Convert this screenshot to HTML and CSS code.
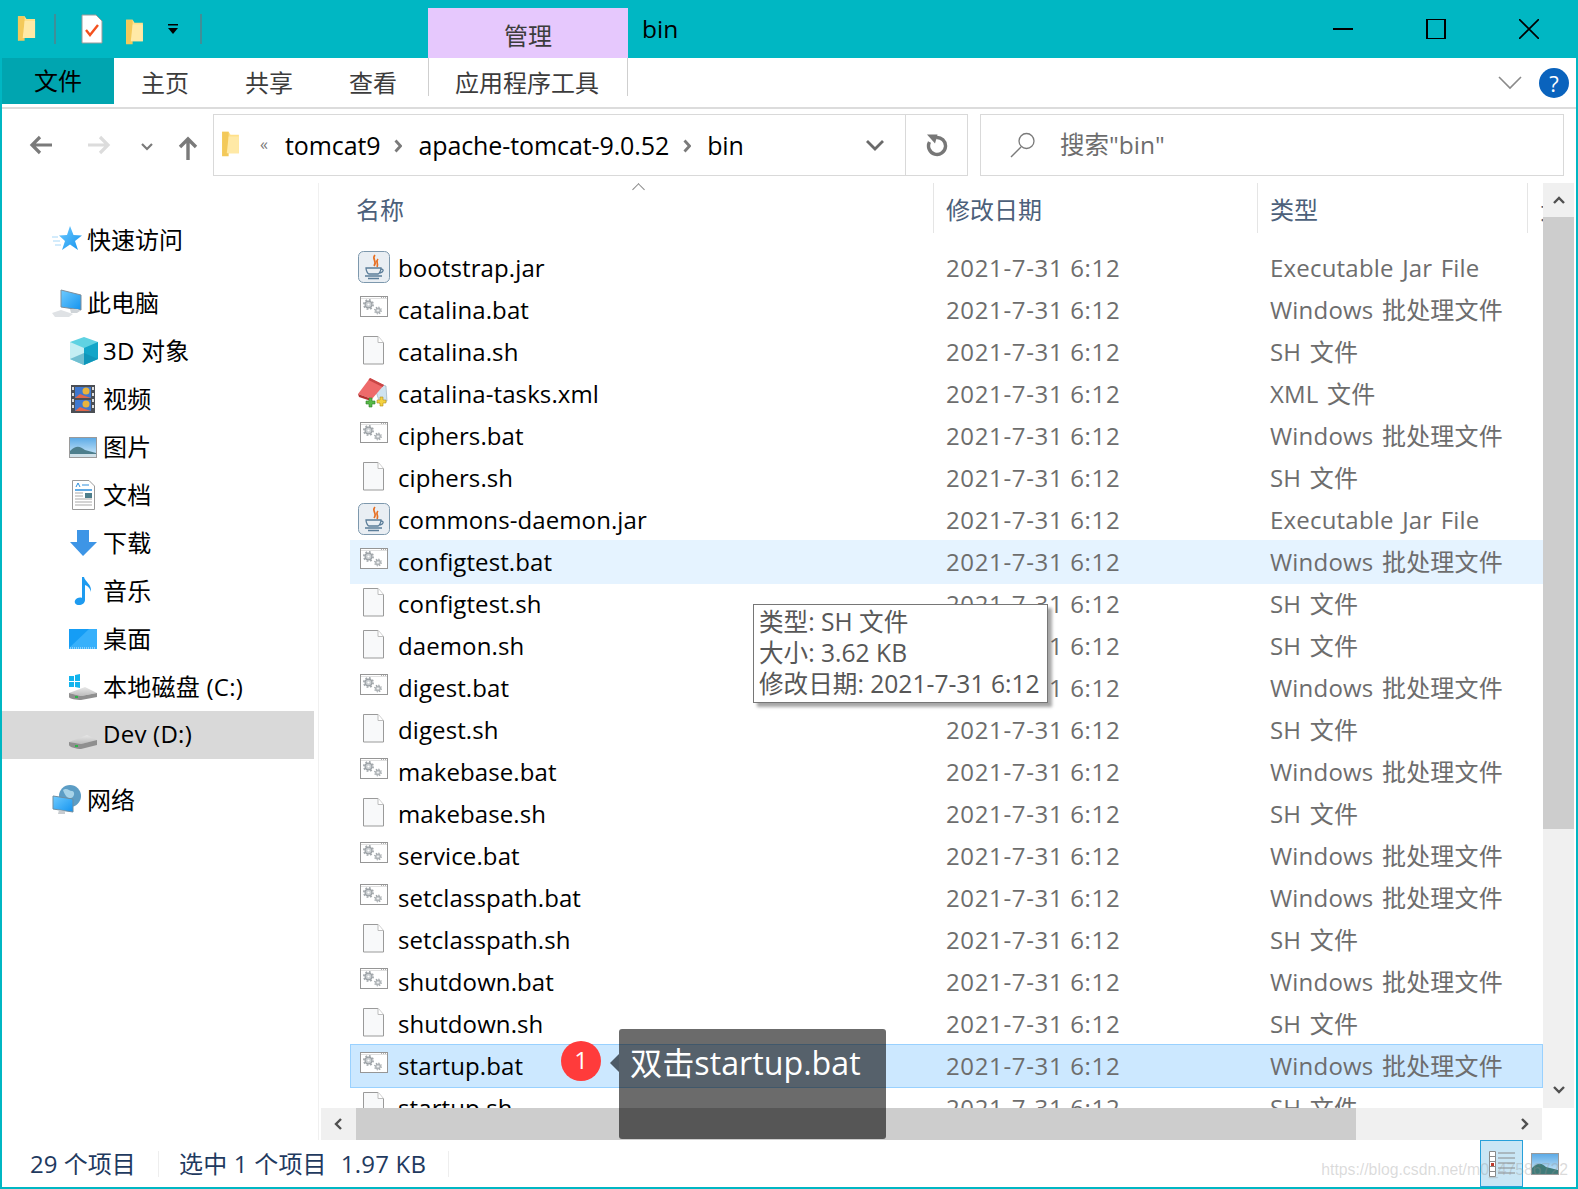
FILE: index.html
```html
<!DOCTYPE html>
<html lang="zh-CN">
<head>
<meta charset="utf-8">
<title>bin</title>
<link rel="stylesheet" href="styles.css">
</head>
<body>
<svg class="defs" width="0" height="0" aria-hidden="true">
  <defs>
    <linearGradient id="blue" x1="0" y1="0" x2="1" y2="1"><stop offset="0" stop-color="#6fcbff"/><stop offset="1" stop-color="#1493ee"/></linearGradient>
    <linearGradient id="disk" x1="0" y1="0" x2="0" y2="1"><stop offset="0" stop-color="#e8e8e8"/><stop offset="1" stop-color="#bcbcbc"/></linearGradient>
    <linearGradient id="sky" x1="0" y1="0" x2="0" y2="1"><stop offset="0" stop-color="#5aa9e6"/><stop offset="1" stop-color="#d8eefa"/></linearGradient>
    <symbol id="folder" viewBox="0 0 20 30">
      <path d="M1 2h7l2 3h9v20H4l-3 3z" fill="#ffe08a"/>
      <path d="M1 2h7v26H5l-4 0z" fill="#f3c95a"/>
      <path d="M6 25h13V7H8z" fill="#ffe9a6"/>
    </symbol>
    <g id="gear"><circle r="3.400" fill="#c9cdd0" stroke="#9aa0a4" stroke-width="1.200"/><circle r="4.600" fill="none" stroke="#a4a9ad" stroke-width="1.800" stroke-dasharray="1.800 1.800"/><circle r="1.100" fill="#fff"/></g>
    <symbol id="bat" viewBox="0 0 32 32">
      <rect x="2.500" y="3.500" width="27" height="20" fill="#fff" stroke="#969696"/>
      <path d="M3 5.500h26" stroke="#e0e0e0"/>
      <path d="M23 4.500h1M25 4.500h1M27 4.500h1" stroke="#b0b0b0"/>
      <use href="#gear" transform="translate(10.500 11.500)"/>
      <use href="#gear" transform="translate(20 17.500) scale(.72)"/>
    </symbol>
    <symbol id="sh" viewBox="0 0 32 32">
      <path d="M5.500 1.500H20l5.500 6v21.500H5.500z" fill="#f8f9fa" stroke="#9a9a9a"/>
      <path d="M20 1.500v6h5.500" fill="#fff" stroke="#bdbdbd"/>
    </symbol>
    <symbol id="jar" viewBox="0 0 32 32">
      <rect x="0.500" y="0.500" width="31" height="31" rx="5" fill="#e9eef3" stroke="#7d98ad"/>
      <path d="M17 4c-4 4 3 6-1 11M20 8c-3 3 1 4-1 8" fill="none" stroke="#e76f22" stroke-width="1.700"/>
      <path d="M8 17h15c0 3-2 6-3 6h-9c-1 0-3-3-3-6z" fill="none" stroke="#5b7d99" stroke-width="1.300"/>
      <path d="M23 18c3 0 3 3-1 4M7 25h17M10 27.500h11" fill="none" stroke="#5b7d99" stroke-width="1.300"/>
    </symbol>
    <symbol id="xml" viewBox="0 0 32 32" overflow="visible">
      <path d="M15 5l13 4 1 15-7 3z" fill="#cfe3ef" stroke="#8fa5b3" stroke-width=".6"/>
      <path d="M12 1l14 7-12 14L0 17z" fill="#ee6a6a"/>
      <path d="M12 1l14 7-1.500 2L10.500 3z" fill="#c94646"/>
      <path d="M0 17l14 5-1 2L1 20z" fill="#b52f2f"/>
      <path d="M11 21h3v3h3v3h-3v3h-3v-3H8v-3h3z" fill="#57b947" stroke="#2e7d2a" stroke-width=".6"/>
      <path d="M22 20h3v3h3v3h-3v3h-3v-3h-3v-3h3z" fill="#f4d240" stroke="#b28f1d" stroke-width=".6"/>
    </symbol>
  </defs>
</svg>

<div class="window">
  <header class="titlebar">
    <div class="qat">
      <svg class="qat-folder" viewBox="0 0 20 30"><use href="#folder"/></svg>
      <span class="qat-sep"></span>
      <svg class="qat-doc" viewBox="0 0 22 30"><path d="M1 1h14l6 6v22H1z" fill="#fff" stroke="#9a9a9a"/><path d="M5 16l4 5 8-10" fill="none" stroke="#f4511e" stroke-width="2.400"/></svg>
      <svg class="qat-folder2" viewBox="0 0 20 30"><use href="#folder"/></svg>
      <svg class="qat-drop" viewBox="0 0 12 11"><path d="M1 0h10v1.500H1z" fill="#000"/><path d="M1 4h10l-5 6z" fill="#000"/></svg>
      <span class="qat-sep"></span>
    </div>
    <div class="manage-tab">管理</div>
    <div class="wintitle">bin</div>
    <div class="wincontrols">
      <svg class="wc" viewBox="0 0 20 20"><path d="M0 10h20" stroke="#000" stroke-width="2"/></svg>
      <svg class="wc" viewBox="0 0 20 20"><rect x="1" y="0" width="18" height="20" fill="none" stroke="#000" stroke-width="2"/></svg>
      <svg class="wc" viewBox="0 0 20 20"><path d="M0 0l20 20M20 0L0 20" stroke="#000" stroke-width="1.600"/></svg>
    </div>
  </header>

  <nav class="ribbon">
    <div class="tab tab-file">文件</div>
    <div class="tab tab-home">主页</div>
    <div class="tab tab-share">共享</div>
    <div class="tab tab-view">查看</div>
    <div class="tab tab-tools">应用程序工具</div>
    <div class="ribbon-right">
      <svg class="ribbon-chev" viewBox="0 0 24 14"><path d="M1 1l11 11L23 1" fill="none" stroke="#8a8a8a" stroke-width="1.600"/></svg>
      <div class="help">?</div>
    </div>
  </nav>

  <div class="addressrow">
    <div class="navbtns">
      <svg class="nav-icon nav-back" viewBox="0 0 24 20"><path d="M23 10H3M11 2l-8 8 8 8" fill="none" stroke="#7a7a7a" stroke-width="3.200"/></svg>
      <svg class="nav-icon nav-fwd" viewBox="0 0 24 20"><path d="M1 10h20M13 2l8 8-8 8" fill="none" stroke="#dcdcdc" stroke-width="3.200"/></svg>
      <svg class="nav-icon nav-down" viewBox="0 0 12 8"><path d="M1 1l5 5 5-5" fill="none" stroke="#7a7a7a" stroke-width="2.200"/></svg>
      <svg class="nav-icon nav-up" viewBox="0 0 20 24"><path d="M10 24V3M2 11l8-8 8 8" fill="none" stroke="#7a7a7a" stroke-width="3.400"/></svg>
    </div>
    <div class="addressbox">
      <svg class="addr-folder" viewBox="0 0 20 30"><use href="#folder"/></svg>
      <span class="addr-more">«</span>
      <span class="crumb">tomcat9</span>
      <svg class="crumb-sep" viewBox="0 0 8 14"><path d="M1.500 1.500L6.500 7l-5 5.500" fill="none" stroke="#7a7a7a" stroke-width="2.800"/></svg>
      <span class="crumb">apache-tomcat-9.0.52</span>
      <svg class="crumb-sep" viewBox="0 0 8 14"><path d="M1.500 1.500L6.500 7l-5 5.500" fill="none" stroke="#7a7a7a" stroke-width="2.800"/></svg>
      <span class="crumb">bin</span>
      <svg class="addr-drop" viewBox="0 0 18 11"><path d="M1 1l8 8 8-8" fill="none" stroke="#6a6a6a" stroke-width="2.800"/></svg>
      <div class="addr-refresh">
        <svg class="refresh" viewBox="0 0 24 24"><path d="M11 4.500A8.500 8.500 0 1 1 4.500 9" fill="none" stroke="#777" stroke-width="3.400"/><path d="M2 1.500h10.500L10 10.500z" fill="#777"/></svg>
      </div>
    </div>
    <div class="searchbox">
      <svg class="search-icon" viewBox="0 0 26 26"><circle cx="16.500" cy="9" r="7.500" fill="none" stroke="#7a7a7a" stroke-width="1.300"/><path d="M11 15L1 25" stroke="#7a7a7a" stroke-width="1.500"/></svg>
      <span>搜索"bin"</span>
    </div>
  </div>

  <main class="main">
    <aside class="sidebar">
      <div class="navitem lv1 sp-top"><svg class="nav-ico" viewBox="0 0 32 32"><path d="M18 2l3.500 9 8.500.5-7 5.500 3 9-8-5.500-8 5.500 3-9-6-5.500 8-.5z" fill="url(#blue)"/><path d="M0 13h6M1 17h7M3 21h6" stroke="#a7d8f8" stroke-width="1"/></svg><span>快速访问</span></div>
      <div class="navitem lv1 sp-sec"><svg class="nav-ico" viewBox="0 0 32 32"><path d="M9 3l20 5v15L9 20z" fill="url(#blue)" stroke="#7f8d99"/><path d="M18 22l1 4h6l3-2-2-2z" fill="#cfd4d8"/><path d="M0 26l9-3 12 4-4 3H3z" fill="#dfe2e5"/></svg><span>此电脑</span></div>
      <div class="navitem lv2"><svg class="nav-ico" viewBox="0 0 32 32"><path d="M16 2l14 5v17l-14 6-14-6V7z" fill="#5fd2e2"/><path d="M2 7l14 6v17L2 24z" fill="#c4eef3"/><path d="M16 13l14-6v17l-14 6z" fill="#12a5c8"/><path d="M2 24l14-6 14 6-14 6z" fill="#0d86a8" opacity=".45"/></svg><span>3D 对象</span></div>
      <div class="navitem lv2"><svg class="nav-ico" viewBox="0 0 32 32"><rect x="3" y="2" width="24" height="28" fill="#4b4f55"/><rect x="7" y="4" width="16" height="11" fill="#3f78d0"/><rect x="7" y="17" width="16" height="11" fill="#3f78d0"/><path d="M7 15l5-4 5 2 6 2zM7 28l5-4 5 2 6 2z" fill="#e0674a"/><circle cx="18" cy="8" r="3.500" fill="#e9b33c"/><circle cx="18" cy="21" r="3.500" fill="#e9b33c"/><path d="M4 4h2v3H4zM4 10h2v3H4zM4 16h2v3H4zM4 22h2v3H4zM24 4h2v3h-2zM24 10h2v3h-2zM24 16h2v3h-2zM24 22h2v3h-2z" fill="#ddd"/></svg><span>视频</span></div>
      <div class="navitem lv2"><svg class="nav-ico" viewBox="0 0 32 32"><rect x="1.500" y="6.500" width="27" height="20" fill="url(#sky)" stroke="#9a9a9a"/><path d="M2 20c6-6 10-5 15-1l11 3v4H2z" fill="#4d7e8c"/><path d="M2 23h26v3H2z" fill="#cfe0e8"/></svg><span>图片</span></div>
      <div class="navitem lv2"><svg class="nav-ico" viewBox="0 0 32 32"><path d="M4.500 1.500H21l5.500 5.500v23.500h-22z" fill="#fff" stroke="#9a9a9a"/><path d="M7 11h17" stroke="#2e8fdc" stroke-width="1.500"/><path d="M8 8l2-4 2 4M14 6h7" stroke="#2e8fdc" fill="none"/><path d="M7 14h8M7 17h8M7 20h17M7 23h17M7 26h17" stroke="#a9a9a9"/><rect x="17" y="14" width="7" height="5" fill="#4d7e8c"/></svg><span>文档</span></div>
      <div class="navitem lv2"><svg class="nav-ico" viewBox="0 0 32 32"><path d="M9 3h12v12h8L15 29 2 15h7z" fill="#3d95e6"/></svg><span>下载</span></div>
      <div class="navitem lv2"><svg class="nav-ico" viewBox="0 0 32 32"><path d="M14 2h2c1 5 8 7 7 15-.5-3-3-6-6-7v15c0 3-3 5-6 5s-5-2-4-4.500 5-3.500 7-2.500z" fill="#1e9bf0"/></svg><span>音乐</span></div>
      <div class="navitem lv2"><svg class="nav-ico" viewBox="0 0 32 32"><rect x="1" y="6" width="28" height="20" fill="#159df5"/><path d="M1 25l20-19h8v20H1z" fill="#37b0fb"/><path d="M2 25h26" stroke="#dff3ff" stroke-dasharray="1 1"/></svg><span>桌面</span></div>
      <div class="navitem lv2"><svg class="nav-ico" viewBox="0 0 32 32"><path d="M1 5h5v5H1zM7 4l5-1v7H7zM1 11h5v5H1zM7 11h5v6l-5-1z" fill="#12b4ee"/><path d="M1 22l16-6 12 6-16 3z" fill="url(#disk)"/><path d="M1 22v4c0 2 8 3 12 3l16-3v-4l-16 3z" fill="#8f8f8f"/><path d="M7 25h3v2H7z" fill="#2fb24a"/></svg><span>本地磁盘 (C:)</span></div>
      <div class="navitem lv2 selected"><svg class="nav-ico" viewBox="0 0 32 32"><path d="M1 23l18-7 10 5-16 4z" fill="url(#disk)"/><path d="M1 23v3c0 2 8 4 12 4l16-4v-5l-16 4z" fill="#8f8f8f"/><path d="M7 26h3v2H7z" fill="#2fb24a"/></svg><span>Dev (D:)</span></div>
      <div class="navitem lv1 sp-net"><svg class="nav-ico" viewBox="0 0 32 32"><circle cx="18" cy="12" r="11" fill="#5c9dc5"/><path d="M11 6c4-3 6 1 9 1s3 6-1 7-6-3-8-8z" fill="#a7d3e8"/><path d="M1 12l20 3v13L1 25z" fill="url(#blue)" stroke="#6f8d9f"/><path d="M7 26l6 1v3H6z" fill="#c8ccd0"/></svg><span>网络</span></div>
    </aside>

    <section class="content">
      <div class="listarea">
        <div class="filelist">
          <div class="sort-caret"></div>
          <div class="listhead">
            <div class="hcell hname">名称</div>
            <div class="hcell hcol">修改日期</div>
            <div class="hcell hcol htype">类型</div>
            <div class="hcell hcol hsize">大小</div>
          </div>
          <div class="rows">
            <div class="row"><div class="name"><svg class="ficon"><use href="#jar"/></svg>bootstrap.jar</div><div class="cell date">2021-7-31 6:12</div><div class="cell kind">Executable Jar File</div></div>
            <div class="row"><div class="name"><svg class="ficon"><use href="#bat"/></svg>catalina.bat</div><div class="cell date">2021-7-31 6:12</div><div class="cell kind">Windows 批处理文件</div></div>
            <div class="row"><div class="name"><svg class="ficon"><use href="#sh"/></svg>catalina.sh</div><div class="cell date">2021-7-31 6:12</div><div class="cell kind">SH 文件</div></div>
            <div class="row"><div class="name"><svg class="ficon"><use href="#xml"/></svg>catalina-tasks.xml</div><div class="cell date">2021-7-31 6:12</div><div class="cell kind">XML 文件</div></div>
            <div class="row"><div class="name"><svg class="ficon"><use href="#bat"/></svg>ciphers.bat</div><div class="cell date">2021-7-31 6:12</div><div class="cell kind">Windows 批处理文件</div></div>
            <div class="row"><div class="name"><svg class="ficon"><use href="#sh"/></svg>ciphers.sh</div><div class="cell date">2021-7-31 6:12</div><div class="cell kind">SH 文件</div></div>
            <div class="row"><div class="name"><svg class="ficon"><use href="#jar"/></svg>commons-daemon.jar</div><div class="cell date">2021-7-31 6:12</div><div class="cell kind">Executable Jar File</div></div>
            <div class="row hover"><div class="name"><svg class="ficon"><use href="#bat"/></svg>configtest.bat</div><div class="cell date">2021-7-31 6:12</div><div class="cell kind">Windows 批处理文件</div></div>
            <div class="row"><div class="name"><svg class="ficon"><use href="#sh"/></svg>configtest.sh</div><div class="cell date">2021-7-31 6:12</div><div class="cell kind">SH 文件</div></div>
            <div class="row"><div class="name"><svg class="ficon"><use href="#sh"/></svg>daemon.sh</div><div class="cell date">2021-7-31 6:12</div><div class="cell kind">SH 文件</div></div>
            <div class="row"><div class="name"><svg class="ficon"><use href="#bat"/></svg>digest.bat</div><div class="cell date">2021-7-31 6:12</div><div class="cell kind">Windows 批处理文件</div></div>
            <div class="row"><div class="name"><svg class="ficon"><use href="#sh"/></svg>digest.sh</div><div class="cell date">2021-7-31 6:12</div><div class="cell kind">SH 文件</div></div>
            <div class="row"><div class="name"><svg class="ficon"><use href="#bat"/></svg>makebase.bat</div><div class="cell date">2021-7-31 6:12</div><div class="cell kind">Windows 批处理文件</div></div>
            <div class="row"><div class="name"><svg class="ficon"><use href="#sh"/></svg>makebase.sh</div><div class="cell date">2021-7-31 6:12</div><div class="cell kind">SH 文件</div></div>
            <div class="row"><div class="name"><svg class="ficon"><use href="#bat"/></svg>service.bat</div><div class="cell date">2021-7-31 6:12</div><div class="cell kind">Windows 批处理文件</div></div>
            <div class="row"><div class="name"><svg class="ficon"><use href="#bat"/></svg>setclasspath.bat</div><div class="cell date">2021-7-31 6:12</div><div class="cell kind">Windows 批处理文件</div></div>
            <div class="row"><div class="name"><svg class="ficon"><use href="#sh"/></svg>setclasspath.sh</div><div class="cell date">2021-7-31 6:12</div><div class="cell kind">SH 文件</div></div>
            <div class="row"><div class="name"><svg class="ficon"><use href="#bat"/></svg>shutdown.bat</div><div class="cell date">2021-7-31 6:12</div><div class="cell kind">Windows 批处理文件</div></div>
            <div class="row"><div class="name"><svg class="ficon"><use href="#sh"/></svg>shutdown.sh</div><div class="cell date">2021-7-31 6:12</div><div class="cell kind">SH 文件</div></div>
            <div class="row picked"><div class="name"><svg class="ficon"><use href="#bat"/></svg>startup.bat</div><div class="cell date">2021-7-31 6:12</div><div class="cell kind">Windows 批处理文件</div></div>
            <div class="row"><div class="name"><svg class="ficon"><use href="#sh"/></svg>startup.sh</div><div class="cell date">2021-7-31 6:12</div><div class="cell kind">SH 文件</div></div>
          </div>
        </div>
        <div class="vscroll">
          <svg class="sb-arrow" viewBox="0 0 12 8"><path d="M1 7l5-5 5 5" fill="none" stroke="#505050" stroke-width="2.400"/></svg>
          <div class="vthumb"></div>
          <svg class="sb-arrow sb-end" viewBox="0 0 12 8"><path d="M1 1l5 5 5-5" fill="none" stroke="#505050" stroke-width="2.400"/></svg>
        </div>
      </div>
      <div class="hscroll">
        <svg class="sb-harrow" viewBox="0 0 8 12"><path d="M7 1L2 6l5 5" fill="none" stroke="#505050" stroke-width="2.400"/></svg>
        <div class="hthumb"></div>
        <svg class="sb-harrow sb-hend" viewBox="0 0 8 12"><path d="M1 1l5 5-5 5" fill="none" stroke="#505050" stroke-width="2.400"/></svg>
      </div>
    </section>
  </main>

  <footer class="statusbar">
    <span class="st-count">29 个项目</span>
    <span class="st-sep"></span>
    <span class="st-sel">选中 1 个项目</span>
    <span class="st-size">1.97 KB</span>
    <span class="st-sep"></span>
    <div class="viewbtns">
      <div class="viewbtn active"><svg class="view-ico" viewBox="0 0 28 28"><path d="M1.500 1.500h6v25h-6z" fill="#fff" stroke="#8a8a8a"/><path d="M1.500 6.500h6M1.500 11.500h6M1.500 16.500h6M1.500 21.500h6M10 3h17M10 8h17M10 13h17M10 18h17M10 23h17" stroke="#8a8a8a"/><rect x="3" y="13" width="3" height="3" fill="#c0392b"/></svg></div>
      <div class="viewbtn thumbbtn"><svg class="view-thumb" viewBox="0 0 28 22"><rect x=".5" y=".5" width="27" height="21" fill="url(#sky)" stroke="#9a9a9a"/><path d="M1 15c6-6 10-5 14-1l12 3v4H1z" fill="#3f7a78"/></svg></div>
    </div>
  </footer>

  <div class="tooltip">
    <div>类型: SH 文件</div>
    <div>大小: 3.62 KB</div>
    <div>修改日期: 2021-7-31 6:12</div>
  </div>
  <div class="badge">1</div>
  <div class="callout">双击startup.bat</div>
  <div class="watermark">https://blog.csdn.net/m0_47586722</div>
</div>
</body>
</html>
```

FILE: styles.css
```css
* { box-sizing: border-box; }
html, body { margin: 0; padding: 0; background: #fff; }
body { font-family: "Open Sans", "Noto Sans CJK SC", sans-serif; color: #000; }
.defs { position: absolute; }

.window {
  position: relative;
  width: 1578px;
  height: 1189px;
  overflow: hidden;
  background: #fff;
  border: 2px solid #00b7c3;
  border-top: 0;
  display: flex;
  flex-direction: column;
  font-size: 24px;
}

/* title bar */
.titlebar {
  height: 58px;
  margin: 0 -2px;
  background: #00b7c3;
  display: flex;
  flex: none;
}
.qat { width: 428px; display: flex; align-items: center; padding-left: 17px; }
.qat-folder { width: 19px; height: 29px; margin-top: -2px; }
.qat-sep { width: 2px; height: 30px; background: #3f8f98; margin-left: 18px; }
.qat-doc { width: 22px; height: 30px; margin-left: 25px; }
.qat-folder2 { width: 19px; height: 28px; margin-left: 22px; margin-top: 6px; }
.qat-drop { width: 12px; height: 11px; margin-left: 23px; }
.qat-drop + .qat-sep { margin-left: 21px; }
.manage-tab {
  width: 200px;
  margin-top: 8px;
  background: #e6c8fd;
  color: #3c3c3c;
  text-align: center;
  line-height: 56px;
  font-size: 24px;
}
.wintitle { margin-left: 14px; line-height: 58px; font-size: 24.5px; }
.wincontrols { margin-left: auto; display: flex; align-items: center; padding-right: 39px; gap: 73px; }
.wc { width: 20px; height: 20px; }

/* ribbon */
.ribbon {
  height: 51px;
  flex: none;
  display: flex;
  align-items: flex-start;
  border-bottom: 2px solid #dcdcdc;
  font-size: 24px;
  color: #3c3c3c;
}
.tab { line-height: 50px; height: 38px; overflow: visible; }
.tab-file { width: 112px; height: 46px; background: #00a5b0; color: #000; text-align: center; line-height: 46px; }
.tab-home { margin-left: 27px; }
.tab-share { margin-left: 56px; }
.tab-view { margin-left: 56px; }
.tab-tools {
  margin-left: 31px;
  width: 200px;
  padding-right: 2px;
  text-align: center;
  border-left: 1px solid #cfcfcf;
  border-right: 1px solid #cfcfcf;
}
.ribbon-right { margin-left: auto; display: flex; align-items: center; height: 50px; padding-right: 7px; gap: 17px; }
.ribbon-chev { width: 24px; height: 14px; }
.help {
  width: 30px;
  height: 30px;
  border-radius: 50%;
  background: #0a63bd;
  color: #fff;
  text-align: center;
  line-height: 30px;
  font-size: 22px;
}

/* address row */
.addressrow { height: 74px; flex: none; display: flex; align-items: flex-start; padding-top: 5px; }
.navbtns { width: 211px; height: 62px; display: flex; align-items: center; padding-left: 27px; }
.nav-icon { flex: none; }
.nav-back { width: 24px; height: 20px; }
.nav-fwd { width: 24px; height: 20px; margin-left: 34px; }
.nav-down { width: 12px; height: 8px; margin-left: 30px; margin-top: 4px; }
.nav-up { width: 20px; height: 24px; margin-left: 25px; margin-top: 6px; }
.addressbox {
  width: 755px;
  height: 62px;
  border: 1px solid #d9d9d9;
  display: flex;
  align-items: center;
  padding-left: 7px;
}
.addr-folder { width: 19px; height: 28px; flex: none; margin-top: -2px; }
.addr-more { color: #7a7a7a; font-size: 16px; margin-left: 20px; width: 25px; margin-top: -3px; }
.crumb { font-size: 25px; letter-spacing: -.1px; line-height: 58px; }
.crumb-sep { width: 8px; height: 14px; margin: 2px 16px 0 14px; flex: none; }
.addr-drop { width: 18px; height: 11px; margin-left: auto; margin-right: 21px; }
.addr-refresh {
  width: 62px;
  height: 60px;
  border-left: 1px solid #d9d9d9;
  display: flex;
  align-items: center;
  justify-content: center;
  flex: none;
}
.refresh { width: 24px; height: 24px; }
.searchbox {
  width: 584px;
  height: 62px;
  margin-left: 12px;
  border: 1px solid #d9d9d9;
  display: flex;
  align-items: center;
  padding-left: 29px;
  color: #6d6d6d;
  gap: 24px;
  font-size: 24.5px;
  line-height: 58px;
}
.search-icon { width: 26px; height: 26px; }

/* main */
.main { flex: none; height: 957px; display: flex; }
.sidebar { width: 317px; flex: none; border-right: 1px solid #f0f0f0; padding-top: 33px; }
.navitem { height: 48px; display: flex; align-items: center; gap: 3px; }
.navitem span { margin-top: -3px; }
.navitem.lv1 { padding-left: 50px; }
.navitem.lv2 { padding-left: 66px; letter-spacing: .25px; }
.nav-ico { width: 32px; height: 32px; flex: none; }
.sp-sec { margin-top: 15px; }
.sp-net { margin-top: 17px; }
.navitem.selected { background: #d9d9d9; margin-right: 4px; }

.content { flex: 1; min-width: 0; display: flex; flex-direction: column; padding-left: 2px; }
.listarea { height: 925px; flex: none; display: flex; }
.filelist { width: 1222px; flex: none; height: 925px; overflow: hidden; position: relative; }
.sort-caret {
  position: absolute;
  left: 313px;
  top: 2px;
  width: 9px;
  height: 9px;
  border-left: 1px solid #888;
  border-top: 1px solid #888;
  transform: rotate(45deg);
}
.listhead { display: flex; height: 50px; color: #4c607a; font-size: 24px; line-height: 54px; }
.hcell { flex: none; white-space: nowrap; border-right: 1px solid #e5e5e5; }
.hname { width: 613px; padding-left: 35px; }
.hcol { width: 324px; padding-left: 12px; }
.htype { width: 270px; }
.hsize { width: 60px; border-right: 0; }
.rows { margin-top: 13px; }
.row {
  margin-left: 29px;
  width: 1193px;
  height: 44px;
  margin-bottom: -2px;
  line-height: 44px;
  display: grid;
  grid-template-columns: 596px 324px 1fr;
  grid-template-rows: 44px;
  white-space: nowrap;
}
.name { display: flex; align-items: center; padding-left: 8px; gap: 8px; height: 44px; letter-spacing: .1px; }
.ficon { width: 32px; height: 32px; flex: none; margin-top: -2px; }
.cell { color: #6d6d6d; }
.date { letter-spacing: .65px; }
.kind { letter-spacing: .2px; word-spacing: 2px; }
.row.hover { background: #e5f3ff; }
.row.picked { background: #cce8ff; box-shadow: inset 0 0 0 1px #99d1ff; }

.vscroll { width: 31px; flex: none; background: #f0f0f0; display: flex; flex-direction: column; align-items: center; }
.sb-arrow { width: 12px; height: 8px; flex: none; margin: 13px 0 13px; }
.vthumb { width: 31px; height: 612px; background: #cdcdcd; flex: none; }
.sb-end { margin-top: auto; margin-bottom: 14px; }
.hscroll { width: 1221px; height: 32px; background: #f0f0f0; display: flex; align-items: center; flex: none; }
.sb-harrow { width: 8px; height: 12px; flex: none; margin: 0 14px 0 13px; }
.hthumb { width: 1000px; height: 32px; background: #cdcdcd; flex: none; }
.sb-hend { margin: 0 13px 0 auto; }

/* status bar */
.statusbar { flex: 1; display: flex; align-items: center; font-size: 24px; color: #1f3a5f; padding-left: 28px; line-height: 42px; }
.st-sep { width: 1px; height: 26px; background: #eeeeee; }
.st-count { width: 128px; }
.st-sel { margin-left: 20px; letter-spacing: .2px; }
.st-size { margin-left: 14px; margin-right: 22px; letter-spacing: .2px; }
.viewbtns { margin-left: auto; display: flex; height: 100%; margin-right: 17px; }
.viewbtn { height: 47px; display: flex; align-items: center; justify-content: center; }
.viewbtn.active { width: 43px; background: #c9e6f5; border: 1px solid #26a0da; }
.thumbbtn { width: 28px; margin-left: 8px; }
.view-ico { width: 28px; height: 28px; }
.view-thumb { width: 28px; height: 22px; }

/* overlays */
.tooltip {
  position: absolute;
  left: 751px;
  top: 604px;
  width: 295px;
  height: 99px;
  padding: 1px 0 0 5px;
  background: #fff;
  border: 1px solid #767676;
  box-shadow: 4px 4px 3px rgba(0, 0, 0, .35);
  color: #575757;
  line-height: 31px;
  font-size: 24.6px;
  white-space: nowrap;
}
.badge {
  position: absolute;
  left: 559px;
  top: 1041px;
  width: 40px;
  height: 40px;
  border-radius: 50%;
  background: #ff3b3b;
  color: #fff;
  font-size: 24px;
  line-height: 38px;
  text-align: center;
}
.callout {
  position: absolute;
  left: 617px;
  top: 1029px;
  width: 267px;
  height: 110px;
  padding: 8px 0 0 11px;
  background: rgba(0, 0, 0, .58);
  border-radius: 3px;
  color: #fff;
  font-size: 32.2px;
  line-height: 52px;
  white-space: nowrap;
}
.callout::before {
  content: "";
  position: absolute;
  left: -9px;
  top: 25px;
  border-top: 9px solid transparent;
  border-bottom: 9px solid transparent;
  border-right: 9px solid #4d5a66;
}
.watermark {
  position: absolute;
  right: 8px;
  top: 1158px;
  color: rgba(150, 150, 150, .35);
  font-family: "Liberation Sans", sans-serif;
  font-size: 15.8px;
  line-height: 24px;
  white-space: nowrap;
}
```
